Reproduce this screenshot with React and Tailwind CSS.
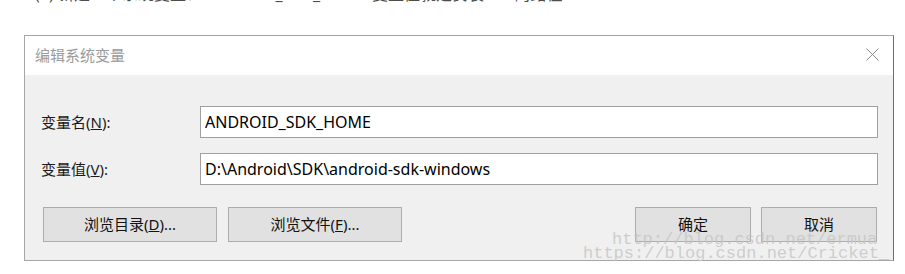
const SANS = "font-['Segoe_UI','Noto_Sans','Noto_Sans_CJK_SC',sans-serif]"

function Field({ label, mnemonic, value }) {
  return (
    <div className="flex items-center">
      <label className="w-[175px] pl-[16px] text-[15px] text-[#1a1a1a]">
        变量{label}(<span className="underline">{mnemonic}</span>):
      </label>
      <div className="flex-1 h-[32px] bg-white border border-[#a0a0a0] flex items-center pl-[4px] text-[16px] text-[#000]">
        {value}
      </div>
    </div>
  )
}

function WinButton({ children, wide }) {
  return (
    <button
      className={`${wide ? 'w-[174px]' : 'w-[116px]'} h-[35px] bg-[#e1e1e1] border border-[#adadad] text-[15px] text-[#111]`}
    >
      {children}
    </button>
  )
}

export default function App() {
  return (
    <div className={`relative w-[905px] h-[274px] bg-white overflow-hidden ${SANS}`}>
      {/* caption cut off at the top */}
      <p className="mt-[-16px] ml-[35px] text-[16px] leading-[20px] text-[#4d4d4d] whitespace-nowrap">
        (4) 新建一个系统变量：ANDROID_SDK_HOME 变量值就是安装SDK的路径
      </p>

      {/* dialog */}
      <div className="ml-[24px] mt-[31px] w-[870px] h-[226px] border border-[#a6a6a6] border-r-[#6e6e6e] flex flex-col">
        <div className="h-[39px] bg-white flex items-center justify-between pl-[10px] pr-[14px]">
          <span className="text-[15px] text-[#9a9a9a]">编辑系统变量</span>
          <svg width="13" height="13" viewBox="0 0 13 13" className="mt-[-2px]">
            <path d="M0.5 0.5 L12.5 12.5 M12.5 0.5 L0.5 12.5" stroke="#8a8a8a" strokeWidth="1" fill="none" />
          </svg>
        </div>
        <div className="flex-1 bg-[#f0f0f0] pt-[31px] pr-[15px] flex flex-col">
          <div className="flex flex-col gap-[15px]">
            <Field label="名" mnemonic="N" value="ANDROID_SDK_HOME" />
            <Field label="值" mnemonic="V" value={'D:\\Android\\SDK\\android-sdk-windows'} />
          </div>
          <div className="flex items-center mt-[22px] pl-[18px]">
            <div className="flex gap-[11px]">
              <WinButton wide>
                浏览目录(<span className="underline">D</span>)...
              </WinButton>
              <WinButton wide>
                浏览文件(<span className="underline">F</span>)...
              </WinButton>
            </div>
            <div className="ml-auto flex gap-[10px] mr-[1px]">
              <WinButton>确定</WinButton>
              <WinButton>取消</WinButton>
            </div>
          </div>
        </div>
      </div>

      {/* watermarks */}
      <div className="absolute left-[612px] top-[231px] font-['Liberation_Mono',monospace] text-[17px] leading-[18px] text-[#c4c4c4]/80 whitespace-nowrap pointer-events-none">
        http://blog.csdn.net/ermua
      </div>
      <div className="absolute left-[583px] top-[245px] font-['Liberation_Mono',monospace] text-[17px] leading-[18px] text-[#c4c4c4]/80 whitespace-nowrap pointer-events-none">
        https://blog.csdn.net/Cricket_
      </div>
    </div>
  )
}
